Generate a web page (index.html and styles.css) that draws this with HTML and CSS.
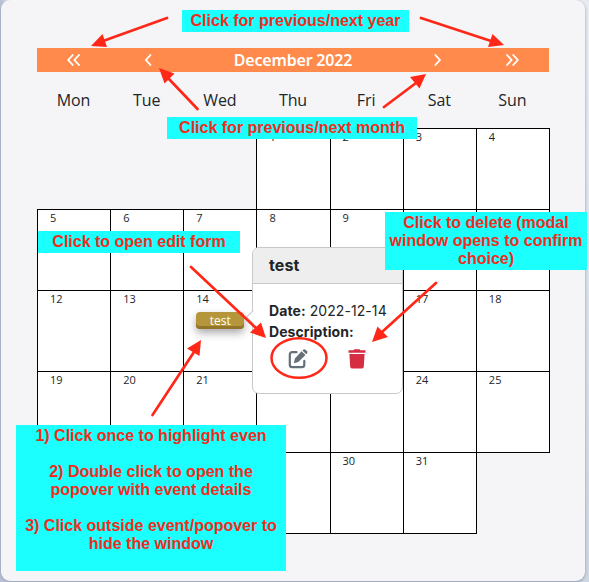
FILE: index.html
```html
<!DOCTYPE html>
<html lang="en">
<head>
<meta charset="utf-8">
<title>Calendar guide</title>
<link rel="stylesheet" href="styles.css">
</head>
<body>
<main class="card">
  <header class="month-bar">
    <svg class="chev" viewBox="0 0 14 12"><path d="M6.3 .5 1.2 6l5.1 5.5M12.5.5 7.4 6l5.1 5.5"/></svg>
    <svg class="chev" viewBox="0 0 14 12"><path d="M11 .5 5.900 6l5.1 5.500"/></svg>
    <h1 class="month">December 2022</h1>
    <svg class="chev" viewBox="0 0 14 12"><path d="M2.8 .5 7.9 6l-5.1 5.5"/></svg>
    <svg class="chev" viewBox="0 0 14 12"><path d="M1.5.5 6.6 6l-5.1 5.5M7.7.5 12.8 6l-5.1 5.5"/></svg>
  </header>
  <div class="weekdays"><span>Mon</span><span>Tue</span><span>Wed</span><span>Thu</span><span>Fri</span><span>Sat</span><span>Sun</span></div>
  <section class="days">
    <div class="day first">1</div><div class="day">2</div><div class="day">3</div><div class="day">4</div>
    <div class="day">5</div><div class="day">6</div><div class="day">7</div><div class="day">8</div><div class="day">9</div><div class="day"></div><div class="day"></div>
    <div class="day">12</div><div class="day">13</div><div class="day">14<button class="event">test</button></div><div class="day"></div><div class="day"></div><div class="day">17</div><div class="day">18</div>
    <div class="day">19</div><div class="day">20</div><div class="day">21</div><div class="day"></div><div class="day"></div><div class="day">24</div><div class="day">25</div>
    <div class="day"></div><div class="day"></div><div class="day"></div><div class="day"></div><div class="day">30</div><div class="day">31</div>
  </section>
</main>

<aside class="popover">
  <h2 class="popover-title">test</h2>
  <div class="popover-body">
    <div><b>Date:</b> 2022-12-14</div>
    <div><b>Description:</b></div>
    <div class="actions">
      <svg class="edit" viewBox="0 0 20 20"><path class="frame" d="M8.5 3.2H4.3Q1.8 3.2 1.8 5.7v10Q1.8 18.2 4.3 18.2h9.5q2.5 0 2.5-2.5v-3.8"/><path class="pencil" d="M13.5 2.3 17.5 6.1 10.3 13.1 5.8 14.3 6.9 9.4ZM14.4 1.4 15.2.7Q16.5-.3 17.7.9l1.2 1.2q1 1.1 0 2.3l-.7.8Z"/></svg>
      <svg class="trash" viewBox="0 0 18 20"><path d="M.5 1.3H5.5L6.3.2h5.2l.8 1.1h5.2v2.4H.5ZM1.4 5h15.2l-.8 12.8q-.1 1.7-1.8 1.7H4q-1.7 0-1.8-1.7Z"/></svg>
    </div>
  </div>
</aside>

<p class="note note-year">Click for previous/next year</p>
<p class="note note-month">Click for previous/next month</p>
<p class="note note-edit">Click to open edit form</p>
<p class="note note-delete">Click to delete (modal<br>window opens to confirm<br>choice)</p>
<p class="note note-event">1) Click once to highlight even<br><br>2) Double click to open the<br>popover with event details<br><br>3) Click outside event/popover to<br>hide the window</p>

<svg class="arrows" viewBox="0 0 589 582">
  <path class="shaft" d="M167 18 103 41M197.500 109 168 78M421 18 491 41M384 107 416 83M191 267 256 328M436 283 382 332M152.500 415 194 352"/>
  <path class="head" d="M91 46 102.500 34 107 47ZM159 68 174.500 73.500 164.500 83.500ZM504 45 492.500 34 488 47ZM426 74 410 77 419.500 88.500ZM266 338 261 322.500 250 332.500ZM372 342 377.500 326.500 388 337ZM201 340 187 348.500 199.500 356Z"/>
  <ellipse class="ring" cx="299" cy="358" rx="27.500" ry="19.800"/>
</svg>
</body>
</html>
```
FILE: styles.css
```css
* { box-sizing: border-box; }
html { height: 100%; overflow: hidden; }
body {
  position: relative;
  margin: 0;
  width: 589px;
  height: 582px;
  padding: 0 4px 1px 1px;
  overflow: hidden;
  background: linear-gradient(90deg, #b9c3d5 0 2px, transparent 8px), linear-gradient(#e8ebf2, #ccd7e3);
}
.card {
  height: 581px;
  padding: 48px 35px 0 36px;
  border-radius: 9px;
  background: #f5f5f8;
  box-shadow: 0 1px 3px #8d94aa;
  font-family: "Open Sans", "Noto Sans", sans-serif;
  color: #212529;
}
.month-bar {
  display: grid;
  grid-template-columns: 1fr 1fr 3fr 1fr 1fr;
  align-items: center;
  justify-items: center;
  width: 512px;
  height: 24px;
  background: #ff8a4c;
  color: #fff;
}
.month {
  margin: 0;
  font: 650 16px/24px "Noto Sans", sans-serif;
  letter-spacing: -.2px;
  white-space: nowrap;
}
.chev { width: 14px; height: 12px; margin-top: -1px; fill: none; stroke: #fff; stroke-width: 1.8; }
.weekdays {
  display: grid;
  grid-template-columns: repeat(7, 1fr);
  width: 512px;
  height: 56px;
  font-size: 16px;
  font-weight: 400;
  letter-spacing: -.1px;
  line-height: 56px;
  text-align: center;
}
.days {
  display: grid;
  grid-template-columns: repeat(7, 1fr);
  grid-auto-rows: 81px;
  width: 512px;
}
.day {
  margin: 0 -1px -1px 0;
  padding: 0 0 0 12px;
  border: 1px solid #000;
  background: #fff;
  font-size: 11px;
  line-height: 15px;
}
.first { grid-column-start: 4; }
.event {
  display: block;
  width: 48px;
  height: 17px;
  margin: 6px 0 0;
  padding: 0;
  border: 0;
  border-radius: 4px;
  background: #b5963a;
  box-shadow: inset 0 -3px #927529, 0 4px 8px #0005;
  color: #fff;
  font: 12px/15px "Open Sans", sans-serif;
}
.popover {
  position: absolute;
  left: 252px;
  top: 247px;
  width: 151px;
  height: 147px;
  border: 1px solid #c8c8c8;
  border-radius: 7px;
  background: #fff;
  color: #212529;
  font: 14px/21px Inter, sans-serif;
  letter-spacing: .08px;
}
.popover::before {
  content: "";
  position: absolute;
  left: -5px;
  top: 64px;
  width: 9px;
  height: 9px;
  border: solid #c8c8c8;
  border-width: 0 0 1px 1px;
  background: #fff;
  transform: rotate(45deg);
}
.popover-title {
  position: relative;
  margin: 0;
  height: 36px;
  padding: 0 16px;
  border-bottom: 1px solid #c8c8c8;
  border-radius: 6px 6px 0 0;
  background: #eee;
  font-size: 16px;
  font-weight: 650;
  line-height: 35px;
}
.popover-body { position: relative; padding: 16px 0 0 16px; white-space: nowrap; }
.popover-body b { font-weight: 650; }
.actions { display: flex; gap: 40px; padding: 7px 0 0 19px; }
.edit { width: 20px; height: 20px; }
.trash { width: 18px; height: 20px; fill: #d52d42; }
.frame { fill: none; stroke: #667078; stroke-width: 2.2; stroke-linecap: round; }
.pencil { fill: #667078; }
.note {
  position: absolute;
  margin: 0;
  background: #1bffff;
  color: #ee2d20;
  font: bold 16px/18px "Liberation Sans", sans-serif;
  text-align: center;
  white-space: nowrap;
}
.note-year { left: 182px; top: 10px; width: 227px; height: 22px; padding-top: 2px; }
.note-month { left: 167px; top: 117px; width: 250px; height: 22px; padding-top: 2px; }
.note-edit { left: 38px; top: 231px; width: 202px; height: 22px; padding-top: 2px; }
.note-delete { left: 385px; top: 212px; width: 202px; height: 58px; padding-top: 2px; }
.note-event { left: 16px; top: 425px; width: 270px; height: 146px; padding-top: 2px; }
.arrows { position: absolute; left: 0; top: 0; width: 589px; height: 582px; }
.shaft { fill: none; stroke: #ff2818; stroke-width: 2.7; stroke-linecap: round; }
.head { fill: #ff2818; }
.ring { fill: none; stroke: #ff2818; stroke-width: 2.5; }
```
